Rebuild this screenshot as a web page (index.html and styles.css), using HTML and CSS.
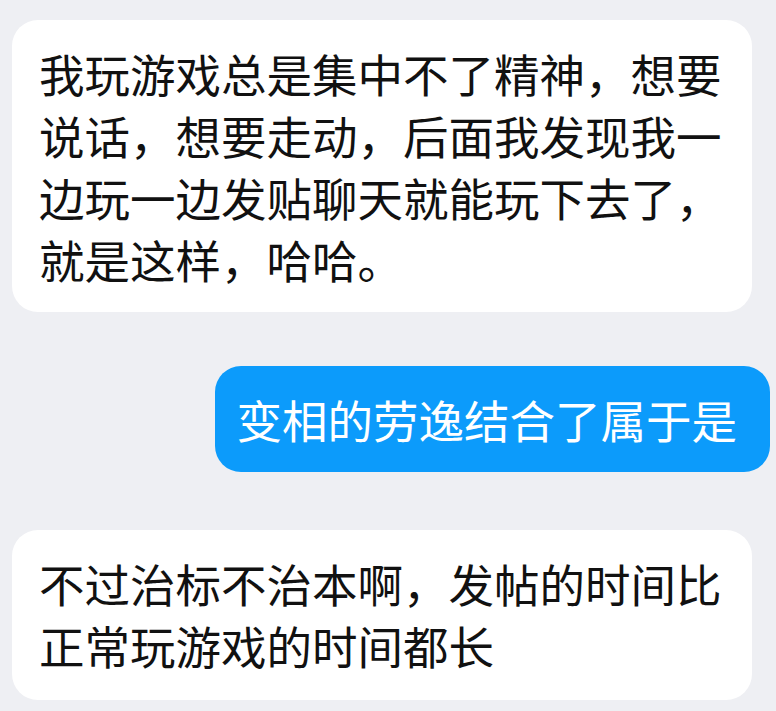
FILE: index.html
```html
<!DOCTYPE html>
<html lang="zh-CN">
<head>
<meta charset="utf-8">
<link rel="stylesheet" href="styles.css">
</head>
<body>
<div class="chat">
  <div class="bubble in first">我玩游戏总是集中不了精神，想要说话，想要走动，后面我发现我一边玩一边发贴聊天就能玩下去了，就是这样，哈哈。</div>
  <div class="bubble out">变相的劳逸结合了属于是</div>
  <div class="bubble in last">不过治标不治本啊，发帖的时间比正常玩游戏的时间都长</div>
</div>
</body>
</html>
```
FILE: styles.css
```css
html, body {
  margin: 0;
  padding: 0;
  background: #eeeff3;
  width: 776px;
  height: 711px;
  overflow: hidden;
}
.chat {
  display: flex;
  flex-direction: column;
  padding: 20px 6px 0 12px;
  font-family: "Noto Sans CJK SC", "Noto Sans", sans-serif;
  font-weight: 400;
  font-size: 45.5px;
  line-height: 62px;
}
.bubble {
  box-sizing: border-box;
  padding: 22px 27px 22px 27px;
  border-radius: 26px;
  max-width: 740px;
  color: #111;
}
.in {
  align-self: flex-start;
  background: #ffffff;
}
.out {
  align-self: flex-end;
  background: #0c9bfb;
  color: #ffffff;
  margin-top: 54px;
  padding: 22px 33px 22px 21px;
}
.last {
  margin-top: 58px;
  padding-bottom: 24px;
}
```
